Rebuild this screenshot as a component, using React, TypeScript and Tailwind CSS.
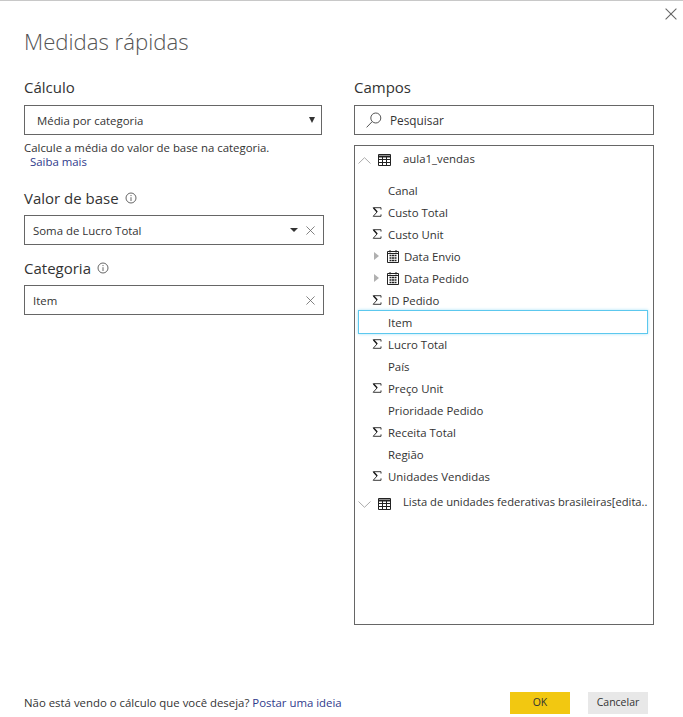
const fieldRows = [
  { label: "Canal", icon: "" },
  { label: "Custo Total", icon: "sum" },
  { label: "Custo Unit", icon: "sum" },
  { label: "Data Envio", icon: "date" },
  { label: "Data Pedido", icon: "date" },
  { label: "ID Pedido", icon: "sum" },
  { label: "Item", icon: "", active: true },
  { label: "Lucro Total", icon: "sum" },
  { label: "País", icon: "" },
  { label: "Preço Unit", icon: "sum" },
  { label: "Prioridade Pedido", icon: "" },
  { label: "Receita Total", icon: "sum" },
  { label: "Região", icon: "" },
  { label: "Unidades Vendidas", icon: "sum" },
];

const CloseIcon = ({ size = 10 }: { size?: number }) => (
  <svg width={size} height={size} viewBox="0 0 10 10" fill="none" stroke="#666" strokeWidth="0.9">
    <path d="M0.5 0.5 9.5 9.5M9.5 0.5 0.5 9.5" />
  </svg>
);

const InfoIcon = () => (
  <svg width="12" height="12" viewBox="0 0 12 12" fill="none" stroke="#555" strokeWidth="0.9">
    <circle cx="6" cy="6" r="5" />
    <path d="M6 5.2V9M6 3V4.1" />
  </svg>
);

const TableIcon = () => (
  <svg width="13" height="12" viewBox="0 0 13 12" fill="none" stroke="#222" strokeWidth="1">
    <path d="M.5 .5h12v11H.5z" />
    <path d="M0 2.5h13" strokeWidth="2" />
    <path d="M.5 5.5h12M.5 8.5h12M4.5 3v8M8.5 3v8" />
  </svg>
);

const CalendarIcon = () => (
  <svg width="12" height="13" viewBox="0 0 12 13" fill="none" stroke="#222" strokeWidth="1">
    <path d="M.5 1.5h11v11H.5z" />
    <path d="M3 0v2.5M9 0v2.5M.5 3.5h11" />
    <path d="M2.5 5.5h2M5 5.5h2M7.5 5.5h2M2.5 8h2M5 8h2M7.5 8h2M2.5 10.5h2M5 10.5h2M7.5 10.5h2" strokeWidth="1.4" />
  </svg>
);

const SigmaIcon = () => (
  <svg width="10" height="10" viewBox="0 0 10 10" fill="none" stroke="#222" strokeWidth="0.9">
    <path d="M9 2.6V.7H1.2L5 5 1.2 9.3H9V7.4" />
    <path d="M1.6 .9 5.2 5" strokeWidth="1.5" />
  </svg>
);

const SearchIcon = () => (
  <svg width="16" height="16" viewBox="0 0 16 16" fill="none" stroke="#555" strokeWidth="1">
    <circle cx="9.8" cy="6" r="5" />
    <path d="M6.2 9.6.6 15.4" />
  </svg>
);

const Chevron = ({ up }: { up: boolean }) => (
  <svg width="13" height="7" viewBox="0 0 13 7" fill="none" stroke="#aaa" strokeWidth="1">
    <path d={up ? "M.5 6.5 6.5 .7l6 5.8" : "M.5 .5l6 5.8 6-5.8"} />
  </svg>
);

const FieldRow = ({ label, icon, active }: { label: string; icon: string; active?: boolean }) => (
  <div className={`mx-[3px] flex w-[290px] items-center border ${active ? "-my-px h-6 border-[#5cc8ee] shadow-[0_0_3px_#a8e2f6]" : "h-[22px] border-transparent"}`}>
    {icon === "date" ? (
      <>
        <span className="ml-[15px] h-0 w-0 border-y-[4.5px] border-l-[5px] border-y-transparent border-l-[#b0b0b0]" />
        <span className="ml-2 flex"><CalendarIcon /></span>
        <span className="ml-[5px] pt-[2px]">{label}</span>
      </>
    ) : (
      <>
        <span className="flex w-[29px] justify-end pr-[6px]">
          {icon === "sum" && <SigmaIcon />}
        </span>
        <span className="pt-[2px]">{label}</span>
      </>
    )}
  </div>
);

export default function App() {
  return (
    <div className="relative flex h-[717px] w-[683px] flex-col overflow-hidden border-t border-[#c8c8c8] bg-white px-6 font-['Open_Sans','Noto_Sans',sans-serif] text-[11.4px] text-[#333]">
      <button className="absolute right-[6px] top-[7px]">
        <CloseIcon size={12} />
      </button>

      <h1 className="mt-[26px] h-8 text-[22.2px] font-light leading-[30px] text-[#555]">Medidas rápidas</h1>

      <div className="mt-[19px] flex gap-[30px]">
        <div className="flex w-[300px] flex-col">
          <h2 className="h-5 text-[15px] leading-[18px] text-[#333]">Cálculo</h2>
          <div className="mt-[7px] flex h-[30px] w-[298px] items-center justify-between border border-[#666] pl-3 pr-[6px]">
            <span className="pt-[2px]">Média por categoria</span>
            <span className="h-0 w-0 border-x-[3px] border-t-[6px] border-x-transparent border-t-[#333]" />
          </div>
          <p className="mt-[6px] h-[14px] whitespace-nowrap leading-[14px]">Calcule a média do valor de base na categoria.</p>
          <a className="ml-[6px] h-[14px] leading-[14px] text-[#2f3a8c]">Saiba mais</a>

          <div className="mt-[19px] flex h-5 items-center gap-[6px]">
            <h2 className="text-[15px] leading-[18px]">Valor de base</h2>
            <InfoIcon />
          </div>
          <div className="mt-[7px] flex h-[30px] items-center justify-between border border-[#666] pl-2 pr-2">
            <span className="pt-[2px]">Soma de Lucro Total</span>
            <span className="flex items-center gap-[8px]">
              <span className="h-0 w-0 border-x-[4px] border-t-[4px] border-x-transparent border-t-[#333]" />
              <CloseIcon size={9} />
            </span>
          </div>

          <div className="mt-[13px] flex h-5 items-center gap-[6px]">
            <h2 className="text-[15px] leading-[18px]">Categoria</h2>
            <InfoIcon />
          </div>
          <div className="mt-[7px] flex h-[30px] items-center justify-between border border-[#666] pl-2 pr-2">
            <span className="pt-[2px]">Item</span>
            <CloseIcon size={9} />
          </div>
        </div>

        <div className="flex w-[300px] flex-col">
          <h2 className="h-5 text-[15px] leading-[18px]">Campos</h2>
          <div className="mt-[7px] flex h-[30px] items-center gap-[8px] border border-[#666] pl-[11px]">
            <SearchIcon />
            <span className="pt-[2px] text-[11.8px]">Pesquisar</span>
          </div>

          <div className="mt-[10px] flex h-[480px] flex-col border border-[#666]">
            <div className="mt-[6px] flex h-4 items-center">
              <span className="ml-[3px] flex"><Chevron up /></span>
              <span className="ml-[7px] flex"><TableIcon /></span>
              <span className="ml-3 -mt-[3px]">aula1_vendas</span>
            </div>
            <div className="mt-[11px] flex flex-col">
              {fieldRows.map((row) => (
                <FieldRow key={row.label} {...row} />
              ))}
            </div>
            <div className="mt-[9px] flex h-4 items-center">
              <span className="ml-[3px] flex"><Chevron up={false} /></span>
              <span className="ml-[7px] flex"><TableIcon /></span>
              <span className="ml-3 -mt-[3px] whitespace-nowrap text-[11.2px]">Lista de unidades federativas brasileiras[edita..</span>
            </div>
          </div>
        </div>
      </div>

      <div className="mt-[67px] flex items-center">
        <p className="w-[486px]">
          Não está vendo o cálculo que você deseja? <a className="text-[#2f3a8c]">Postar uma ideia</a>
        </p>
        <button className="h-[22px] w-[60px] bg-[#f2c811] text-[10.5px] text-[#333]">OK</button>
        <button className="ml-[18px] h-[22px] w-[60px] bg-[#e8e8e8] text-[10.5px] text-[#333]">Cancelar</button>
      </div>
    </div>
  );
}
